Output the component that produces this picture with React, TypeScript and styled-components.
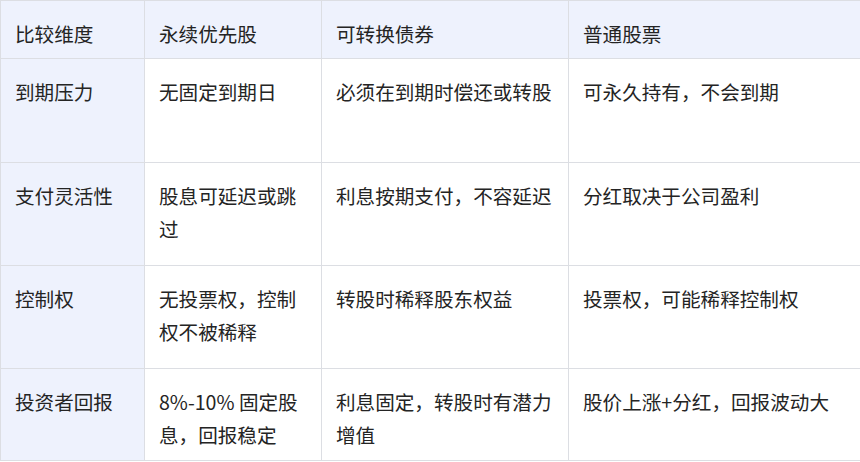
import React from "react";
import styled, { createGlobalStyle } from "styled-components";

const Global = createGlobalStyle`
  html, body {
    margin: 0;
    padding: 0;
    background: #ffffff;
    overflow: hidden;
  }
  body {
    font-family: "Noto Sans CJK SC", "Noto Sans", sans-serif;
  }
`;

const Wrap = styled.div`
  width: 860px;
  height: 462px;
  overflow: hidden;
`;

const Table = styled.table`
  border-collapse: collapse;
  table-layout: fixed;
  width: 920px;
  font-size: 19.6px;
  line-height: 33px;
  color: #242424;
`;

const Row = styled.tr<{ $h: number }>`
  height: ${(p) => p.$h}px;
`;

const HeadCell = styled.th`
  background: #eef2fd;
  border: 1px solid #dcdee3;
  padding: 16px 10px 0 14px;
  text-align: left;
  vertical-align: top;
  font-weight: 400;
`;

const Cell = styled.td<{ $label?: boolean }>`
  background: ${(p) => (p.$label ? "#eef2fd" : "#ffffff")};
  border: 1px solid #dcdee3;
  padding: 16px 10px 0 14px;
  text-align: left;
  vertical-align: top;
  word-break: break-all;
`;

const headers = ["比较维度", "永续优先股", "可转换债券", "普通股票"];
const widths = [144, 177, 247, 352];

const rows: { h: number; cells: string[] }[] = [
  { h: 104, cells: ["到期压力", "无固定到期日", "必须在到期时偿还或转股", "可永久持有，不会到期"] },
  { h: 103, cells: ["支付灵活性", "股息可延迟或跳过", "利息按期支付，不容延迟", "分红取决于公司盈利"] },
  { h: 103, cells: ["控制权", "无投票权，控制权不被稀释", "转股时稀释股东权益", "投票权，可能稀释控制权"] },
  { h: 92, cells: ["投资者回报", "8%-10% 固定股息，回报稳定", "利息固定，转股时有潜力增值", "股价上涨+分红，回报波动大"] },
];

export default function App() {
  return (
    <Wrap>
      <Global />
      <Table>
        <colgroup>
          {widths.map((w, i) => (
            <col key={i} style={{ width: w }} />
          ))}
        </colgroup>
        <thead>
          <Row $h={58}>
            {headers.map((h) => (
              <HeadCell key={h}>{h}</HeadCell>
            ))}
          </Row>
        </thead>
        <tbody>
          {rows.map((r) => (
            <Row key={r.cells[0]} $h={r.h}>
              {r.cells.map((c, i) => (
                <Cell key={i} $label={i === 0}>
                  {c}
                </Cell>
              ))}
            </Row>
          ))}
        </tbody>
      </Table>
    </Wrap>
  );
}
